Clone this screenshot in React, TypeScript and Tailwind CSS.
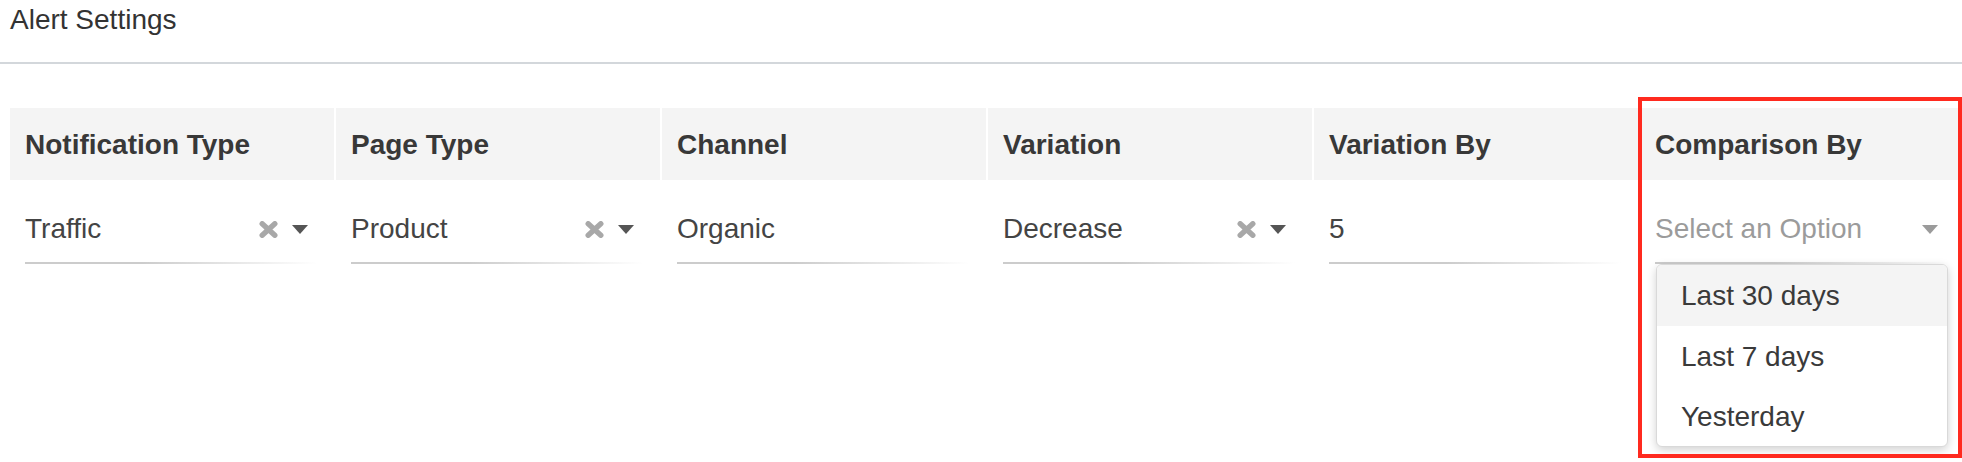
import React from "react";

function Cross() {
  return (
    <svg width="19" height="17" viewBox="0 0 19 17" className="shrink-0">
      <path d="M3.2 2.8 L15.8 14.2 M15.8 2.8 L3.2 14.2" stroke="#a8a8a8" strokeWidth="5.4" strokeLinecap="round" fill="none" />
    </svg>
  );
}

function Caret({ color }: { color: string }) {
  return (
    <svg width="16" height="9" viewBox="0 0 16 9" className="shrink-0">
      <polygon points="0,0 16,0 8,9" fill={color} />
    </svg>
  );
}

type Col = {
  title: string;
  value: string;
  placeholder?: boolean;
  clear?: boolean;
  caret?: boolean;
  menu?: boolean;
};

const cols: Col[] = [
  { title: "Notification Type", value: "Traffic", clear: true, caret: true },
  { title: "Page Type", value: "Product", clear: true, caret: true },
  { title: "Channel", value: "Organic" },
  { title: "Variation", value: "Decrease", clear: true, caret: true },
  { title: "Variation By", value: "5" },
  { title: "Comparison By", value: "Select an Option", placeholder: true, caret: true, menu: true },
];

export default function App() {
  return (
    <div className="relative h-[462px] w-[1962px] overflow-hidden bg-white font-['Liberation_Sans',Arial,sans-serif]">
      <div className="pl-[10px] pt-[4px] text-[28px] leading-[32px] text-[#333333]">Alert Settings</div>
      <div className="mt-[26px] h-[2px] bg-[#d3d7db]" />
      <div className="ml-[10px] mt-[44px] grid grid-cols-[324px_324px_324px_324px_324px_322px] gap-x-[2px]">
        {cols.map((c) => (
          <div key={c.title} className="relative flex flex-col">
            <div className="flex h-[72px] items-center bg-[#f4f4f4] px-[15px] pt-[2px] text-[28px] font-bold leading-[32px] text-[#383838]">
              {c.title}
            </div>
            <div className="relative ml-[15px] w-[292px]">
              <div className="flex h-[82px] items-start pt-[33px]">
                <div className="flex h-[32px] w-full items-center pr-[9px]">
                  <span
                    className={
                      c.placeholder
                        ? "flex-1 text-[28px] leading-[32px] text-[#9b9b9b]"
                        : "flex-1 text-[28px] leading-[32px] text-[#444444]"
                    }
                  >
                    {c.value}
                  </span>
                  {c.clear && <Cross />}
                  {c.caret && (
                    <div className={c.clear ? "ml-[14px] flex items-center" : "flex items-center"}>
                      <Caret color={c.placeholder ? "#9b9b9b" : "#555555"} />
                    </div>
                  )}
                </div>
              </div>
              <div className="h-[2px] bg-linear-to-r from-[#cccccc] from-40% to-white" />
              {c.menu && (
                <div className="absolute left-[1px] top-full w-[292px] overflow-hidden rounded-[6px] border border-[#d9d9d9] bg-white shadow-[0_3px_10px_rgba(0,0,0,0.18)]">
                  <div className="h-[61px] bg-[#f4f4f4] pl-[24px] pt-[15px] text-[28px] leading-[32px] text-[#3a3a3a]">Last 30 days</div>
                  <div className="h-[60px] pl-[24px] pt-[15px] text-[28px] leading-[32px] text-[#3a3a3a]">Last 7 days</div>
                  <div className="h-[60px] pl-[24px] pt-[15px] text-[28px] leading-[32px] text-[#3a3a3a]">Yesterday</div>
                </div>
              )}
            </div>
            {c.menu && (
              <div className="pointer-events-none absolute left-[-2px] top-[-11px] h-[361px] w-[324px] border-4 border-[#ff2a1f]" />
            )}
          </div>
        ))}
      </div>
    </div>
  );
}
